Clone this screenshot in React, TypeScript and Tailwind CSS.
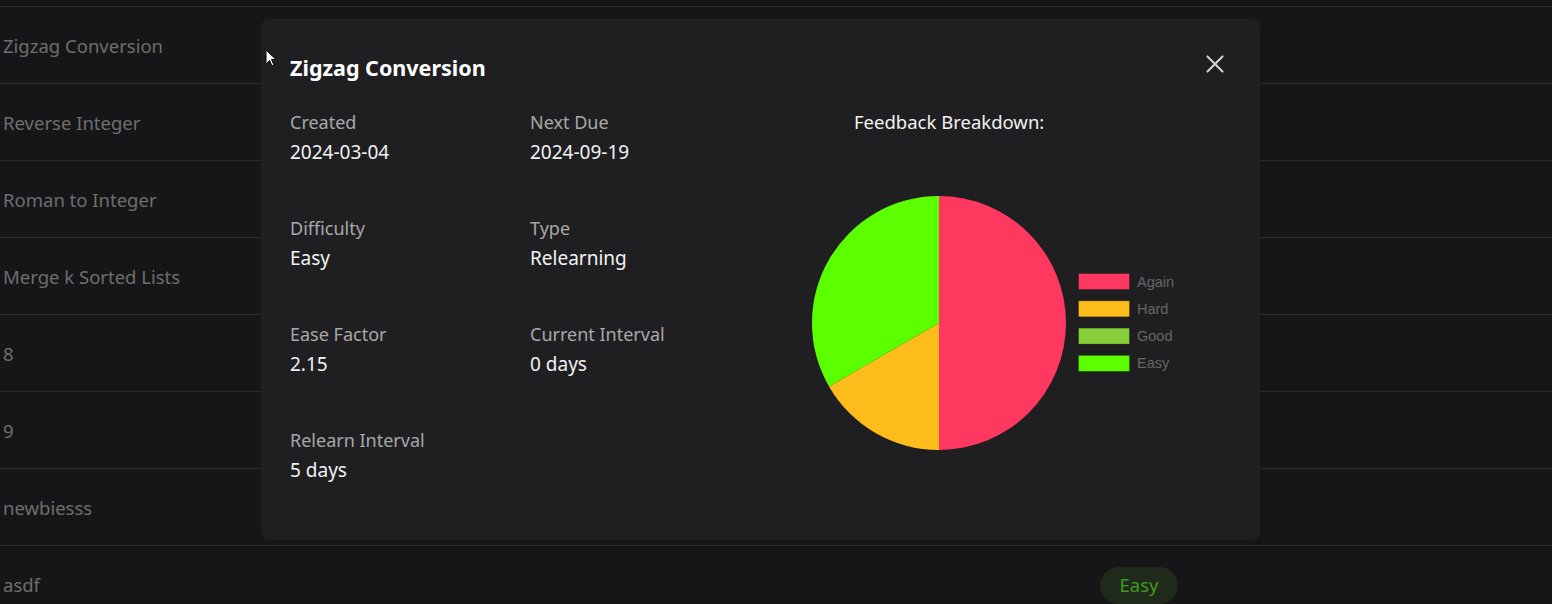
import React from 'react';
import { X } from 'lucide-react';

const rows = [
    { title: 'Zigzag Conversion' },
    { title: 'Reverse Integer' },
    { title: 'Roman to Integer' },
    { title: 'Merge k Sorted Lists' },
    { title: '8' },
    { title: '9' },
    { title: 'newbiesss' },
    { title: 'asdf', badge: 'Easy' },
];

const stats = [
    { label: 'Created', value: '2024-03-04' },
    { label: 'Next Due', value: '2024-09-19' },
    { label: 'Difficulty', value: 'Easy' },
    { label: 'Type', value: 'Relearning' },
    { label: 'Ease Factor', value: '2.15' },
    { label: 'Current Interval', value: '0 days' },
    { label: 'Relearn Interval', value: '5 days' },
];

const legend = [
    { label: 'Again', color: '#ff3860' },
    { label: 'Hard', color: '#ffbd1b' },
    { label: 'Good', color: '#86cf3a' },
    { label: 'Easy', color: '#5cff00' },
];

const FeedbackChart = () => (
    <svg width="390" height="280" viewBox="0 0 390 280">
        <path d="M135 138 L135 11 A127 127 0 0 1 135 265 Z" fill="#ff3860" />
        <path d="M135 138 L135 265 A127 127 0 0 1 25 201.5 Z" fill="#ffbd1b" />
        <path d="M135 138 L25 201.5 A127 127 0 0 1 135 11 Z" fill="#5cff00" />
        {legend.map((item, i) => (
            <g key={item.label}>
                <rect x="274.5" y={88.5 + i * 27.3} width="51" height="16" fill={item.color} stroke="rgba(0,0,0,0.25)" />
                <text
                    x="333"
                    y={101.5 + i * 27.3}
                    fill="#666666"
                    fontSize="14.5"
                    fontFamily="'Liberation Sans', Arial, sans-serif"
                >
                    {item.label}
                </text>
            </g>
        ))}
    </svg>
);

export default function App() {
    return (
        <div className="relative h-[604px] w-full overflow-hidden bg-[#161618] font-['Noto_Sans',sans-serif]">
            <div className="h-[7px] border-b border-[#2c2c2e]" />
            {rows.map((row) => (
                <div key={row.title} className="flex h-[77px] items-center border-b border-[#2c2c2e] pl-[3px] pt-[2px]">
                    <span className="w-[1097px] text-[18.5px] text-[#6e6e6e]">{row.title}</span>
                    {row.badge && (
                        <span className="flex h-[37px] w-[78px] items-center justify-center rounded-full bg-[#1f2a1b] text-[18.5px] text-[#3f9a1e]">
                            {row.badge}
                        </span>
                    )}
                </div>
            ))}

            <div className="absolute left-[261px] top-[19px] h-[521px] w-[999px] rounded-lg bg-[#1f1f21] pl-[29px] pt-[35px]">
                <button className="absolute right-[30px] top-[30px] text-[#cfcfcf]">
                    <X className="h-[30px] w-[30px]" strokeWidth={1.7} />
                </button>
                <h2 className="text-[21.5px] font-bold leading-[28px] text-white">Zigzag Conversion</h2>

                <div className="mt-[25px] flex">
                    <div className="grid w-[514px] grid-cols-[240px_240px] gap-y-[46px]">
                        {stats.map((s) => (
                            <div key={s.label}>
                                <div className="text-[18px] leading-[30px] text-[#a8a8a8]">{s.label}</div>
                                <div className="text-[19px] leading-[30px] text-[#f2f2f2]">{s.value}</div>
                            </div>
                        ))}
                    </div>
                    <div className="flex flex-col">
                        <div className="pl-[50px] text-[18.5px] leading-[30px] text-[#f2f2f2]">Feedback Breakdown:</div>
                        <div className="mt-[48px]">
                            <FeedbackChart />
                        </div>
                    </div>
                </div>
            </div>

            <svg className="absolute left-[265px] top-[49px]" width="12" height="19" viewBox="0 0 12 19">
                <path d="M1 1 L1 15 L4.5 11.5 L7 17 L9 16 L6.5 10.5 L11 10.5 Z" fill="#ffffff" stroke="#000000" strokeWidth="1" />
            </svg>
        </div>
    );
}
